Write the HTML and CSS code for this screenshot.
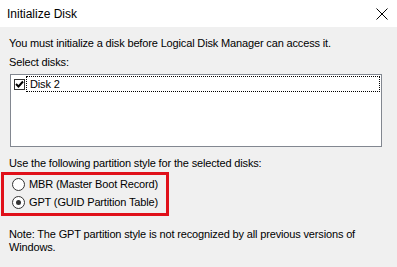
FILE: index.html
```html
<!DOCTYPE html>
<html>
<head>
  <meta charset="utf-8">
  <title>Initialize Disk</title>
  <link rel="stylesheet" href="styles.css">
</head>
<body>
<div class="dialog">
  <div class="titlebar">
    <span class="title">Initialize Disk</span>
    <svg class="close" width="12" height="12" viewBox="0 0 12 12">
      <path d="M0.5 0.5 L11.5 11.5 M11.5 0.5 L0.5 11.5" stroke="#000" stroke-width="1"/>
    </svg>
  </div>
  <div class="content">
    <p class="intro">You must initialize a disk before Logical Disk Manager can access it.</p>
    <p class="label">Select disks:</p>
    <div class="listbox">
      <div class="item">
        <span class="check">
          <svg width="9" height="9" viewBox="0 0 9 9"><path d="M1 4 L3.5 6.5 L8 1.5" fill="none" stroke="#000" stroke-width="2"/></svg>
        </span>
        <span class="focus">Disk 2</span>
      </div>
    </div>
    <p class="label style-label">Use the following partition style for the selected disks:</p>
    <div class="options">
      <div class="highlight"></div>
      <label class="radio"><span class="dot"></span>MBR (Master Boot Record)</label>
      <label class="radio"><span class="dot on"></span>GPT (GUID Partition Table)</label>
    </div>
    <p class="note">Note: The GPT partition style is not recognized by all previous versions of Windows.</p>
  </div>
</div>
</body>
</html>
```

FILE: styles.css
```css
* {
  box-sizing: border-box;
}

body {
  margin: 0;
  width: 397px;
  height: 267px;
  background: #f0f0f0;
  font-family: "Liberation Sans", Arial, sans-serif;
  font-size: 11px;
  letter-spacing: -0.15px;
  color: #000;
  overflow: hidden;
}

p {
  margin: 0;
}

.titlebar {
  height: 27px;
  background: #fff;
  display: flex;
  align-items: center;
  justify-content: space-between;
  padding: 0 9px 0 7px;
}

.title {
  font-size: 12px;
  letter-spacing: 0;
  color: #000;
}

.content {
  padding: 10px 16px 0 9px;
}

.intro {
  line-height: 13px;
}

.label {
  margin-top: 6px;
  line-height: 13px;
}

.listbox {
  margin: 5px 0 0 1px;
  width: 372px;
  height: 73px;
  background: #fff;
  border: 1px solid #828790;
  padding: 1px 1px 0 1px;
}

.item {
  display: flex;
  align-items: center;
  height: 16px;
}

.check {
  width: 11px;
  height: 11px;
  margin: 0 1px 0 2px;
  border: 1px solid #333;
  background: #fff;
  display: flex;
  align-items: center;
  justify-content: center;
}

.focus {
  flex: 1;
  height: 16px;
  line-height: 14px;
  padding-left: 3px;
  border: 1px dotted #000;
}

.style-label {
  margin-top: 10px;
}

.options {
  position: relative;
  margin-top: 2px;
  padding: 3px 0 0 3px;
  height: 44px;
}

.highlight {
  position: absolute;
  left: -8px;
  top: 0;
  width: 168px;
  height: 44px;
  border: 3px solid #e0101a;
}

.radio {
  display: flex;
  align-items: center;
  height: 18px;
}

.dot {
  width: 13px;
  height: 13px;
  border: 1px solid #333;
  border-radius: 50%;
  background: #fff;
  margin-right: 4px;
  position: relative;
}

.dot.on::after {
  content: "";
  position: absolute;
  left: 3px;
  top: 3px;
  width: 5px;
  height: 5px;
  border-radius: 50%;
  background: #333;
}

.note {
  margin-top: 12px;
  line-height: 13px;
}
```
